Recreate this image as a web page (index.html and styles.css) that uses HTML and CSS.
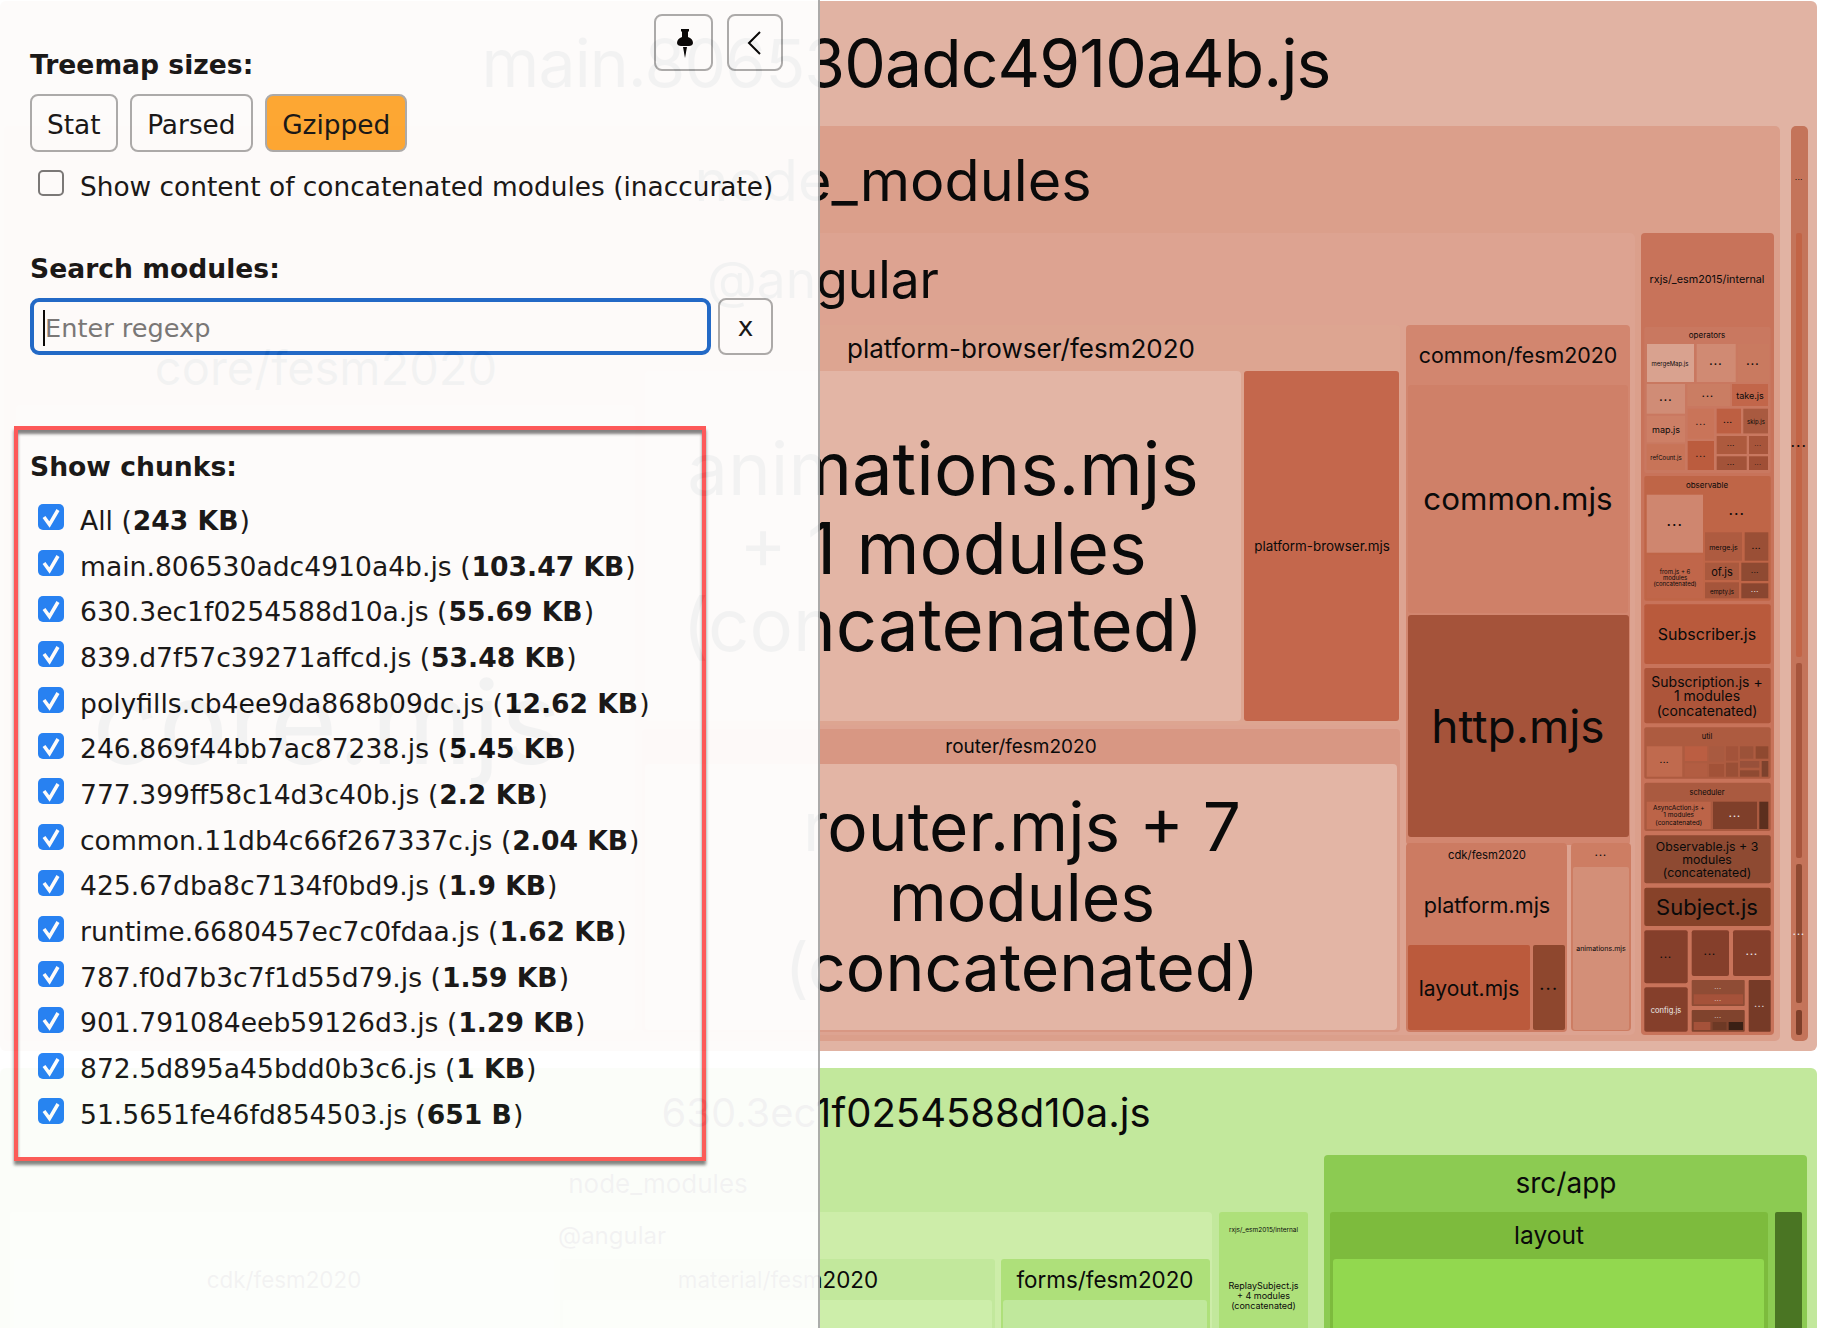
FILE: index.html
```html
<!DOCTYPE html>
<html>

<head>
    <meta charset="utf-8">
    <title>Bundle treemap</title>
    <link rel="stylesheet" href="styles.css">
</head>

<body>
  <!-- treemap, every tile sits at its own place on the canvas -->
  <svg class="treemap" width="1830" height="1328" viewBox="0 0 1830 1328">
    <!-- main chunk -->
    <rect x="0" y="1" width="1817" height="1050" rx="6" fill="#e1b3a3"/>
    <text class="label" x="906" y="63" font-size="66" letter-spacing="-0.9">main.806530adc4910a4b.js</text>
    <rect x="4" y="126" width="1776" height="915" rx="5" fill="#db9f8b"/>
    <text class="label" x="893" y="180" font-size="57.5">node_modules</text>
    <rect x="1791" y="126" width="17" height="915" rx="5" fill="#c4745a"/>
    <text class="dots" x="1799" y="180" font-size="6">...</text>
    <rect x="1796" y="233" width="6" height="424" rx="2" fill="#c26446"/>
    <rect x="1796" y="663" width="6" height="195" rx="2" fill="#a7553c"/>
    <rect x="1796" y="864" width="6" height="139" rx="2" fill="#8f4a32"/>
    <rect x="1796" y="1010" width="6" height="25" rx="2" fill="#7e3f2a"/>
    <text class="dots" x="1799" y="447" font-size="12">...</text>
    <text class="dots light" x="1799" y="935" font-size="9">...</text>

    <rect x="8" y="233" width="1627" height="802" rx="5" fill="#dda391"/>
    <text class="label" x="823" y="279" font-size="51.5">@angular</text>

    <!-- core -->
    <rect x="14" y="325" width="622" height="706" rx="4" fill="#dea794"/>
    <text class="label" x="326" y="367" font-size="47">core/fesm2020</text>
    <rect x="16" y="405" width="619" height="625" rx="4" fill="#e3b6a7"/>
    <text class="label" x="327" y="722" font-size="116">core.mjs</text>

    <!-- platform-browser -->
    <rect x="642" y="325" width="758" height="400" rx="4" fill="#dda591"/>
    <text class="label" x="1021" y="348" font-size="26">platform-browser/fesm2020</text>
    <rect x="645" y="371" width="596" height="350" rx="4" fill="#e3b5a5"/>
    <text class="label" x="943" y="468" font-size="72.5">animations.mjs</text>
    <text class="label" x="943" y="547" font-size="72">+ 1 modules</text>
    <text class="label" x="943" y="624" font-size="72.5">(concatenated)</text>
    <rect x="1244" y="371" width="155" height="350" rx="3" fill="#c4674c"/>
    <text class="label" x="1322" y="546" font-size="13.4">platform-browser.mjs</text>

    <!-- router -->
    <rect x="642" y="729" width="758" height="303" rx="4" fill="#d89783"/>
    <text class="label" x="1021" y="746" font-size="19">router/fesm2020</text>
    <rect x="645" y="764" width="752" height="266" rx="4" fill="#e3b5a5"/>
    <text class="label" x="1022" y="826" font-size="67.5">router.mjs + 7</text>
    <text class="label" x="1022" y="897" font-size="66">modules</text>
    <text class="label" x="1022" y="967" font-size="66">(concatenated)</text>

    <!-- common -->
    <rect x="1406" y="325" width="224" height="520" rx="4" fill="#d2866f"/>
    <text class="label" x="1518" y="355" font-size="21.4">common/fesm2020</text>
    <rect x="1408" y="385" width="220" height="228" rx="3" fill="#cf8068"/>
    <text class="label" x="1518" y="499" font-size="31.3">common.mjs</text>
    <rect x="1408" y="615" width="221" height="222" rx="3" fill="#a5533a"/>
    <text class="label" x="1518" y="726" font-size="46">http.mjs</text>

    <!-- cdk -->
    <rect x="1406" y="843" width="161" height="189" rx="4" fill="#cc7b62"/>
    <text class="label" x="1487" y="855" font-size="11.3">cdk/fesm2020</text>
    <text class="label" x="1487" y="905" font-size="21.6">platform.mjs</text>
    <rect x="1408" y="945" width="122" height="85" rx="2" fill="#bb5a3c"/>
    <text class="label" x="1469" y="988" font-size="21">layout.mjs</text>
    <rect x="1533" y="945" width="32" height="85" rx="2" fill="#8e472e"/>
    <text class="dots" x="1549" y="990" font-size="14">...</text>
    <rect x="1571" y="843" width="60" height="188" rx="4" fill="#cd7d63"/>
    <text class="dots" x="1601" y="856" font-size="9">...</text>
    <rect x="1573" y="867" width="56" height="163" rx="2" fill="#d38f78"/>
    <text class="label" x="1601" y="948" font-size="7">animations.mjs</text>

    <!-- rxjs -->
    <rect x="1641" y="233" width="133" height="802" rx="4" fill="#c8735a"/>
    <text class="label" x="1707" y="279" font-size="10.8">rxjs/_esm2015/internal</text>

    <rect x="1644.3" y="327" width="126.4" height="146" rx="2" fill="#c97860"/>
    <text class="label" x="1707" y="335" font-size="8">operators</text>
    <rect x="1647" y="344" width="47" height="38" fill="#d9a28f"/>
    <text class="label" x="1670" y="363" font-size="6">mergeMap.js</text>
    <rect x="1696.7" y="344" width="39" height="38" fill="#d08a73"/>
    <text class="dots" x="1716" y="365" font-size="10">...</text>
    <rect x="1737.7" y="344" width="31.3" height="38" fill="#c97a60"/>
    <text class="dots" x="1753" y="365" font-size="10">...</text>
    <rect x="1646.7" y="384" width="38.3" height="29.7" fill="#d08c76"/>
    <text class="dots" x="1666" y="401" font-size="10">...</text>
    <rect x="1687.3" y="384" width="42.7" height="22" fill="#ca7d63"/>
    <text class="dots" x="1708" y="397" font-size="9">...</text>
    <rect x="1732" y="384" width="36" height="22" fill="#c2664a"/>
    <text class="label" x="1750" y="395" font-size="9">take.js</text>
    <rect x="1646.7" y="415.7" width="38.3" height="26.7" fill="#cd7f66"/>
    <text class="label" x="1666" y="429" font-size="9">map.js</text>
    <rect x="1646.7" y="444.3" width="38.3" height="25.7" fill="#c87458"/>
    <text class="label" x="1666" y="457" font-size="6">refCount.js</text>
    <rect x="1687.7" y="408.7" width="26.3" height="30" fill="#c97459"/>
    <text class="dots" x="1701" y="425" font-size="8">...</text>
    <rect x="1716.7" y="408.7" width="24.3" height="24.7" fill="#bd5f42"/>
    <text class="dots" x="1728" y="423" font-size="7">...</text>
    <rect x="1743.3" y="408.7" width="24.7" height="24.7" fill="#a95a40"/>
    <text class="label" x="1756" y="421" font-size="6">skip.js</text>
    <rect x="1687.7" y="441" width="26.3" height="29" fill="#bb5c3e"/>
    <text class="dots" x="1701" y="457" font-size="8">...</text>
    <rect x="1716.7" y="436" width="30" height="18" fill="#ad5a3e"/>
    <text class="dots" x="1731" y="446" font-size="6">...</text>
    <rect x="1749" y="436" width="19" height="18" fill="#a7553b"/>
    <text class="dots" x="1758" y="446" font-size="5">...</text>
    <rect x="1716.7" y="456.3" width="30" height="13.7" fill="#a35339"/>
    <text class="dots" x="1731" y="465" font-size="6">...</text>
    <rect x="1749" y="456.3" width="19" height="13.7" fill="#a04f36"/>
    <text class="dots" x="1758" y="465" font-size="5">...</text>

    <rect x="1644.3" y="476" width="126.4" height="124.7" rx="2" fill="#bf6547"/>
    <text class="label" x="1707" y="485" font-size="8">observable</text>
    <rect x="1646.7" y="494.7" width="56.3" height="58" fill="#cf866f"/>
    <text class="dots" x="1675" y="526" font-size="12">...</text>
    <text class="dots" x="1737" y="515" font-size="12">...</text>
    <rect x="1705" y="532.3" width="37" height="28.4" fill="#ae5b40"/>
    <text class="label" x="1723.5" y="547" font-size="7">merge.js</text>
    <rect x="1744.7" y="532.3" width="23.6" height="28.4" fill="#9a4f36"/>
    <text class="dots" x="1756.5" y="549" font-size="7">...</text>
    <rect x="1646.7" y="555" width="56.3" height="43.3" fill="#c0664a"/>
    <text class="label" x="1675" y="571" font-size="6">from.js + 6</text>
    <text class="label" x="1675" y="577" font-size="6">modules</text>
    <text class="label" x="1675" y="583" font-size="6">(concatenated)</text>
    <rect x="1705" y="562.7" width="34" height="17.3" fill="#aa593e"/>
    <text class="label" x="1722" y="571.5" font-size="11">of.js</text>
    <rect x="1741.3" y="562.7" width="27" height="18.3" fill="#8f4a32"/>
    <text class="dots" x="1755" y="573" font-size="6">...</text>
    <rect x="1705" y="582.3" width="34" height="16" fill="#a5553b"/>
    <text class="label" x="1722" y="591" font-size="6">empty.js</text>
    <rect x="1741.3" y="583.3" width="27" height="15" fill="#8a4630"/>
    <text class="dots light" x="1755" y="592" font-size="6">...</text>

    <rect x="1644.3" y="604.3" width="126.4" height="59.7" rx="2" fill="#b95a3c"/>
    <text class="label" x="1707" y="634" font-size="16">Subscriber.js</text>
    <rect x="1644.3" y="668" width="126.4" height="55.3" rx="2" fill="#ad553a"/>
    <text class="label" x="1707" y="681" font-size="14">Subscription.js +</text>
    <text class="label" x="1707" y="695.5" font-size="14">1 modules</text>
    <text class="label" x="1707" y="710" font-size="14">(concatenated)</text>

    <rect x="1644.3" y="727.3" width="126.4" height="51.4" rx="2" fill="#ad5b40"/>
    <text class="label" x="1707" y="736" font-size="7.5">util</text>
    <rect x="1646.7" y="746.3" width="35.6" height="30.4" fill="#c06a4e"/>
    <text class="dots" x="1664.5" y="763" font-size="7">...</text>
    <rect x="1684.7" y="746.3" width="22.6" height="14.7" fill="#bb5e42"/>
    <rect x="1684.7" y="763.3" width="22.6" height="13.4" fill="#b25d42"/>
    <rect x="1709" y="746.3" width="15" height="15.4" fill="#a95a40"/>
    <rect x="1709" y="764" width="15" height="12.7" fill="#a25238"/>
    <rect x="1726" y="746.3" width="12" height="14.4" fill="#a3533a"/>
    <rect x="1726" y="762.7" width="12" height="14" fill="#9a4f36"/>
    <rect x="1740" y="746.3" width="13.3" height="12.4" fill="#9c5239"/>
    <rect x="1755.7" y="746.3" width="12.6" height="12.4" fill="#8f4930"/>
    <rect x="1740" y="761" width="19.3" height="6.7" fill="#98503a"/>
    <rect x="1740" y="770.3" width="19.3" height="6.4" fill="#8f4a32"/>
    <rect x="1761.7" y="761" width="6.6" height="15.7" fill="#7d422d"/>

    <rect x="1644.3" y="782.7" width="126.4" height="48.3" rx="2" fill="#aa5a40"/>
    <text class="label" x="1707" y="792" font-size="7.5">scheduler</text>
    <rect x="1646.7" y="801.7" width="64" height="27.3" fill="#bc6448"/>
    <text class="label" x="1678.7" y="808" font-size="6.5">AsyncAction.js +</text>
    <text class="label" x="1678.7" y="815" font-size="6.5">1 modules</text>
    <text class="label" x="1678.7" y="823" font-size="6.5">(concatenated)</text>
    <rect x="1713" y="801.7" width="44" height="27.3" fill="#7f3f2a"/>
    <text class="dots light" x="1735" y="817" font-size="9">...</text>
    <rect x="1759.3" y="801.7" width="9" height="27.3" fill="#5c2f1e"/>

    <rect x="1644.3" y="835.3" width="126.4" height="48" rx="2" fill="#8e4a32"/>
    <text class="label" x="1707" y="846" font-size="12.3">Observable.js + 3</text>
    <text class="label" x="1707" y="859" font-size="12.3">modules</text>
    <text class="label" x="1707" y="872" font-size="12.3">(concatenated)</text>
    <rect x="1644.3" y="887.7" width="126.4" height="38.3" rx="2" fill="#874229"/>
    <text class="label" x="1707" y="906.5" font-size="22">Subject.js</text>

    <rect x="1644.3" y="930.3" width="43.4" height="53" rx="2" fill="#853f2b"/>
    <text class="dots" x="1666" y="958" font-size="9">...</text>
    <rect x="1691.7" y="930.3" width="37.3" height="45.7" rx="2" fill="#853f2b"/>
    <text class="dots" x="1710" y="955" font-size="9">...</text>
    <rect x="1733" y="930.3" width="37.7" height="45.7" rx="2" fill="#853f2b"/>
    <text class="dots light" x="1752" y="955" font-size="9">...</text>
    <rect x="1644.3" y="987.3" width="43.4" height="44.4" rx="2" fill="#853f2b"/>
    <text class="label light" x="1666" y="1010" font-size="7.5">config.js</text>
    <rect x="1691.7" y="980" width="53" height="26" rx="1" fill="#8f4c35"/>
    <text class="dots light" x="1718" y="989" font-size="5">...</text>
    <rect x="1693.7" y="994.3" width="49.3" height="10" fill="#a5523a"/>
    <text class="dots light" x="1718" y="1001" font-size="5">...</text>
    <rect x="1691.7" y="1010" width="53" height="21.7" rx="1" fill="#80432d"/>
    <text class="dots light" x="1718" y="1018" font-size="5">...</text>
    <rect x="1693.7" y="1022" width="16.7" height="8" fill="#a5523a"/>
    <rect x="1712.7" y="1022" width="13.7" height="8" fill="#6d3925"/>
    <rect x="1728.7" y="1022" width="14.3" height="8" fill="#3a2015"/>
    <rect x="1748.7" y="980" width="22" height="51.7" rx="1" fill="#763a27"/>
    <text class="dots light" x="1759.7" y="1007" font-size="8">...</text>

    <!-- 630 chunk -->
    <rect x="0" y="1068" width="1817" height="270" rx="6" fill="#c2e89c"/>
    <text class="label" x="906" y="1112" font-size="40">630.3ec1f0254588d10a.js</text>
    <text class="label" x="658" y="1183" font-size="26">node_modules</text>
    <rect x="10" y="1212" width="1202" height="126" rx="4" fill="#cdeda9"/>
    <text class="label" x="612" y="1235" font-size="24">@angular</text>
    <rect x="14" y="1259" width="540" height="79" rx="3" fill="#d2efb2"/>
    <text class="label" x="284" y="1279" font-size="22.4">cdk/fesm2020</text>
    <rect x="560" y="1259" width="435" height="79" rx="3" fill="#c2e89c"/>
    <text class="label" x="778" y="1279" font-size="22.4">material/fesm2020</text>
    <rect x="563" y="1300" width="429" height="38" rx="3" fill="#cdeeaa"/>
    <rect x="1001" y="1259" width="209" height="79" rx="3" fill="#aee07a"/>
    <text class="label" x="1105" y="1279" font-size="22.4">forms/fesm2020</text>
    <rect x="1003" y="1300" width="204" height="38" rx="3" fill="#c0e89c"/>
    <rect x="1219" y="1212" width="89" height="126" rx="3" fill="#aee07a"/>
    <text class="label" x="1263.5" y="1230" font-size="6.5">rxjs/_esm2015/internal</text>
    <text class="label" x="1263.5" y="1285" font-size="9">ReplaySubject.js</text>
    <text class="label" x="1263.5" y="1295" font-size="9">+ 4 modules</text>
    <text class="label" x="1263.5" y="1305" font-size="9">(concatenated)</text>
    <rect x="1324" y="1155" width="483" height="183" rx="4" fill="#8ccb52"/>
    <text class="label" x="1566" y="1183" font-size="28">src/app</text>
    <rect x="1330" y="1212" width="438" height="126" rx="3" fill="#7dbb3d"/>
    <text class="label" x="1549" y="1235" font-size="24.5">layout</text>
    <rect x="1333" y="1259" width="431" height="79" rx="3" fill="#92d84f"/>
    <rect x="1775" y="1212" width="27" height="126" rx="2" fill="#4a7523"/>
  </svg>

  <div class="sidebar">
    <button class="tool pin">
      <svg width="26" height="30" viewBox="0 0 26 30">
        <path d="M9 1h8v2l-1 1v5c3 1 5 3 5 6 0 2-2 3-4 3H9c-2 0-4-1-4-3 0-3 2-5 5-6V4L9 3z"/>
        <path d="M11 19h4l-2 11z"/>
      </svg>
    </button>
    <button class="tool back">
      <svg width="16" height="26" viewBox="0 0 16 26">
        <path d="M13 2 2 13l11 11"/>
      </svg>
    </button>

    <div class="title">Treemap sizes:</div>
    <div class="sizes">
      <button class="size">Stat</button>
      <button class="size">Parsed</button>
      <button class="size active">Gzipped</button>
    </div>
    <label class="row concat">
      <span class="check"></span>
      <span>Show content of concatenated modules (inaccurate)</span>
    </label>

    <div class="title search-title">Search modules:</div>
    <div class="search">
      <div class="search-input"><span class="caret"></span><span class="placeholder">Enter regexp</span></div>
      <button class="clear">x</button>
    </div>

    <div class="chunks">
      <div class="title">Show chunks:</div>
      <div class="chunk-list">
        <label class="row"><span class="check on"><svg viewBox="0 0 26 26"><path d="M6 13l5.5 7.5L20 6"/></svg></span><span>All (<b>243 KB</b>)</span></label>
        <label class="row"><span class="check on"><svg viewBox="0 0 26 26"><path d="M6 13l5.5 7.5L20 6"/></svg></span><span>main.806530adc4910a4b.js (<b>103.47 KB</b>)</span></label>
        <label class="row"><span class="check on"><svg viewBox="0 0 26 26"><path d="M6 13l5.5 7.5L20 6"/></svg></span><span>630.3ec1f0254588d10a.js (<b>55.69 KB</b>)</span></label>
        <label class="row"><span class="check on"><svg viewBox="0 0 26 26"><path d="M6 13l5.5 7.5L20 6"/></svg></span><span>839.d7f57c39271affcd.js (<b>53.48 KB</b>)</span></label>
        <label class="row"><span class="check on"><svg viewBox="0 0 26 26"><path d="M6 13l5.5 7.5L20 6"/></svg></span><span>polyfills.cb4ee9da868b09dc.js (<b>12.62 KB</b>)</span></label>
        <label class="row"><span class="check on"><svg viewBox="0 0 26 26"><path d="M6 13l5.5 7.5L20 6"/></svg></span><span>246.869f44bb7ac87238.js (<b>5.45 KB</b>)</span></label>
        <label class="row"><span class="check on"><svg viewBox="0 0 26 26"><path d="M6 13l5.5 7.5L20 6"/></svg></span><span>777.399ff58c14d3c40b.js (<b>2.2 KB</b>)</span></label>
        <label class="row"><span class="check on"><svg viewBox="0 0 26 26"><path d="M6 13l5.5 7.5L20 6"/></svg></span><span>common.11db4c66f267337c.js (<b>2.04 KB</b>)</span></label>
        <label class="row"><span class="check on"><svg viewBox="0 0 26 26"><path d="M6 13l5.5 7.5L20 6"/></svg></span><span>425.67dba8c7134f0bd9.js (<b>1.9 KB</b>)</span></label>
        <label class="row"><span class="check on"><svg viewBox="0 0 26 26"><path d="M6 13l5.5 7.5L20 6"/></svg></span><span>runtime.6680457ec7c0fdaa.js (<b>1.62 KB</b>)</span></label>
        <label class="row"><span class="check on"><svg viewBox="0 0 26 26"><path d="M6 13l5.5 7.5L20 6"/></svg></span><span>787.f0d7b3c7f1d55d79.js (<b>1.59 KB</b>)</span></label>
        <label class="row"><span class="check on"><svg viewBox="0 0 26 26"><path d="M6 13l5.5 7.5L20 6"/></svg></span><span>901.791084eeb59126d3.js (<b>1.29 KB</b>)</span></label>
        <label class="row"><span class="check on"><svg viewBox="0 0 26 26"><path d="M6 13l5.5 7.5L20 6"/></svg></span><span>872.5d895a45bdd0b3c6.js (<b>1 KB</b>)</span></label>
        <label class="row"><span class="check on"><svg viewBox="0 0 26 26"><path d="M6 13l5.5 7.5L20 6"/></svg></span><span>51.5651fe46fd854503.js (<b>651 B</b>)</span></label>
      </div>
    </div>
  </div>
</body>
</html>
```

FILE: styles.css
```css
html, body {
  margin: 0;
  width: 1830px;
  height: 1328px;
  overflow: hidden;
  background: #fff;
}

body {
  position: relative;
  font-family: "DejaVu Sans", Verdana, sans-serif;
  font-size: 26.4px;
  color: #111;
}

/* treemap */
.treemap {
  display: block;
}

.treemap text {
  font-family: Inter, "Liberation Sans", sans-serif;
  text-anchor: middle;
  fill: #0a0a0a;
}

.treemap .label {
  dominant-baseline: central;
}

.treemap .dots {
  font-weight: 700;
  letter-spacing: 0.12em;
}

.treemap .light {
  fill: #eee;
}

/* sidebar lies over the treemap */
.sidebar {
  position: absolute;
  left: 0;
  top: 0;
  width: 820px;
  height: 1328px;
  box-sizing: border-box;
  padding: 49px 0 0 30px;
  background: #fff;
  border-right: 2px solid #aaa;
  opacity: 0.95;
}

.title {
  font-size: 26.6px;
  font-weight: 700;
  line-height: 32px;
}

b {
  padding: 0 1px;
  font-size: 26.6px;
}

button {
  box-sizing: border-box;
  background: #fff;
  border: 2px solid #aaa;
  border-radius: 8px;
  padding: 0;
  font-family: inherit;
  font-size: 26.4px;
  color: #111;
}

.tool {
  position: absolute;
  top: 14px;
  height: 57px;
  display: flex;
  align-items: center;
  justify-content: center;
}

.pin {
  left: 654px;
  width: 59px;
}

.pin svg {
  margin-left: 2px;
  fill: #000;
}

.back {
  left: 727px;
  width: 56px;
}

.back svg {
  fill: none;
  stroke: #000;
  stroke-width: 2;
}

.sizes {
  display: flex;
  gap: 12.5px;
  margin-top: 13px;
}

.size {
  height: 58px;
  padding: 3px 15px 0;
}

.size.active {
  background: #ffa72e;
}

.row {
  display: flex;
  align-items: center;
  gap: 16px;
  height: 45.7px;
  padding-left: 8px;
}

.chunk-list .row {
  font-size: 26.6px;
}

.concat {
  height: 30px;
  margin-top: 19px;
}

.check {
  box-sizing: border-box;
  flex: none;
  width: 26px;
  height: 26px;
  margin-bottom: 6px;
  border: 2px solid #767676;
  border-radius: 5px;
  background: #fff;
}

.check.on {
  border: none;
  background: #1f7ff5;
}

.check svg {
  display: block;
  fill: none;
  stroke: #fff;
  stroke-width: 3.5;
}

.search-title {
  margin-top: 52px;
}

.search {
  display: flex;
  gap: 7px;
  margin-top: 13px;
}

.search-input {
  box-sizing: border-box;
  display: flex;
  align-items: center;
  width: 681px;
  height: 57px;
  padding: 2px 0 0 9px;
  border: 4px solid #1a66c9;
  border-radius: 9px;
  background: #fff;
}

.caret {
  width: 2px;
  height: 36px;
  background: #000;
}

.placeholder {
  font-size: 25.6px;
  color: #757575;
}

.clear {
  width: 55px;
  height: 57px;
}

/* red box round the chunk list */
.chunks {
  box-sizing: border-box;
  width: 692px;
  margin: 71px 0 0 -16px;
  padding: 21px 4px 19.5px 12px;
  border: 4px solid #f55;
  box-shadow: 0 4px 3px rgba(0, 0, 0, 0.5), inset 0 4px 3px rgba(0, 0, 0, 0.5);
}

.chunk-list {
  margin-top: 14.5px;
}
```
